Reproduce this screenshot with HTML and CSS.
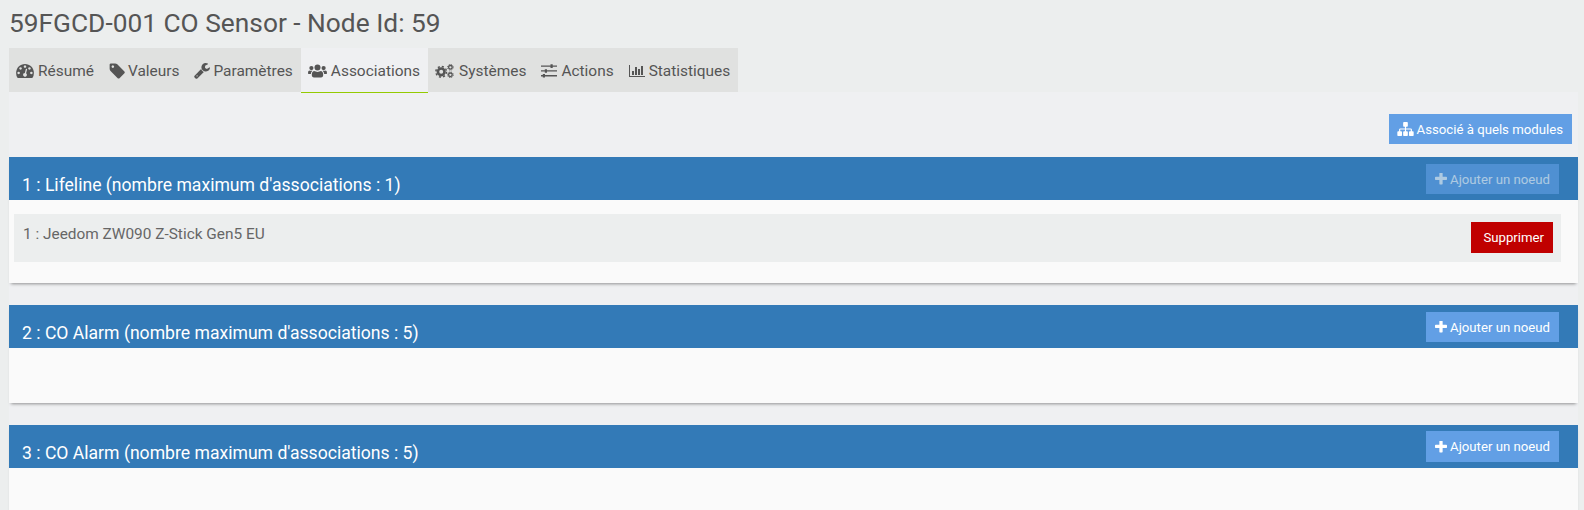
FILE: index.html
```html
<!DOCTYPE HTML>
<html lang="fr">
<head>
    <meta charset="UTF-8">
    <title>59FGCD-001 CO Sensor - Node Id: 59</title>
    <link rel="stylesheet" href="styles.css">
</head>
<body>
    <svg class="defs" width="0" height="0">
        <symbol id="icon-plus" viewBox="192 192 1408 1408"><path d="M1600 736v192q0 40-28 68t-68 28h-416v416q0 40-28 68t-68 28h-192q-40 0-68-28t-28-68v-416h-416q-40 0-68-28t-28-68v-192q0-40 28-68t68-28h416v-416q0-40 28-68t68-28h192q40 0 68 28t28 68v416h416q40 0 68 28t28 68z"/></symbol>
    </svg>

    <h1>59FGCD-001 CO Sensor - Node Id: 59</h1>

    <!-- onglets -->
    <ul class="tabs">
        <li class="tab">
            <svg class="icon icon-gauge" viewBox="0 256 1792 1408"><path d="M384 1152q0-53-37.5-90.5t-90.5-37.5-90.5 37.5-37.5 90.5 37.5 90.5 90.5 37.5 90.5-37.5 37.5-90.5zm192-448q0-53-37.5-90.5t-90.5-37.5-90.5 37.5-37.5 90.5 37.5 90.5 90.5 37.5 90.5-37.5 37.5-90.5zm428 481l101-382q6-26-7.5-48.5t-38.5-29.5-48 6.5-30 39.5l-101 382q-60 5-107 43.5t-63 98.5q-20 77 20 146t117 89 146-20 89-117q16-60-6-117t-72-91zm660-33q0-53-37.5-90.5t-90.5-37.5-90.5 37.5-37.5 90.5 37.5 90.5 90.5 37.5 90.5-37.5 37.5-90.5zm-640-640q0-53-37.5-90.5t-90.5-37.5-90.5 37.5-37.5 90.5 37.5 90.5 90.5 37.5 90.5-37.5 37.5-90.5zm448 192q0-53-37.5-90.5t-90.5-37.5-90.5 37.5-37.5 90.5 37.5 90.5 90.5 37.5 90.5-37.5 37.5-90.5zm320 448q0 261-141 483-19 29-54 29h-1402q-35 0-54-29-141-221-141-483 0-182 71-348t191-286 286-191 348-71 348 71 286 191 191 286 71 348z"/></svg>
            Résumé
        </li>
        <li class="tab">
            <svg class="icon icon-tag" viewBox="64 128 1600 1520"><path d="M576 448q0-53-37.5-90.5t-90.5-37.5-90.5 37.5-37.5 90.5 37.5 90.5 90.5 37.5 90.5-37.5 37.5-90.5zm1067 576q0 53-37 90l-491 492q-39 37-91 37-53 0-90-37l-715-716q-38-37-64.5-101t-26.5-117v-416q0-52 38-90t90-38h416q53 0 117 26.5t102 64.5l715 714q37 39 37 91z"/></svg>
            Valeurs
        </li>
        <li class="tab">
            <svg class="icon icon-tag" viewBox="64 128 1664 1664"><path d="M448 1472q0-26-19-45t-45-19-45 19-19 45 19 45 45 19 45-19 19-45zm644-420l-682 682q-37 37-90 37-52 0-91-37l-106-108q-38-36-38-90 0-53 38-91l681-681q39 98 114.5 173.5t173.5 114.5zm634-435q0 39-23 106-47 134-164.5 217.5t-258.5 83.5q-185 0-316.5-131.5t-131.5-316.5 131.5-316.5 316.5-131.5q58 0 121.5 16.5t107.5 46.5q16 11 16 28t-16 28l-293 169v224l193 107q5-3 79-48.5t135.5-81 70.5-35.5q15 0 23.5 10t8.5 25z"/></svg>
            Paramètres
        </li>
        <li class="tab active">
            <svg class="icon icon-users" viewBox="0 0 19 13">
                <circle cx="9.5" cy="3" r="3"/>
                <circle cx="3.4" cy="3.6" r="2.1"/>
                <circle cx="15.6" cy="3.6" r="2.1"/>
                <path d="M6 6.6q3.5 1.6 7 0 2.2.4 2.2 3.7 0 2.7-2.2 2.7H6q-2.2 0-2.2-2.7 0-3.3 2.2-3.7z"/>
                <path d="M3.2 6.2h1.2q-1.5 1.2-1.6 3.4H1.2Q0 9.600 0 8.400 0 6.200 1.200 6q1 .5 2 .2zM15.800 6.200h-1.200q1.500 1.200 1.600 3.400h1.600Q19 9.600 19 8.400 19 6.200 17.800 6q-1 .5-2 .2z"/>
            </svg>
            Associations
        </li>
        <li class="tab">
            <svg class="icon icon-cogs" viewBox="0 0 19 14">
                <circle class="gear-ring" cx="6.2" cy="7.8" r="3.3"/>
                <circle class="gear-teeth" cx="6.2" cy="7.8" r="5.3"/>
                <circle class="gear-ring-small" cx="15.4" cy="3.300" r="1.800"/>
                <circle class="gear-teeth-small" cx="15.4" cy="3.300" r="2.800"/>
                <circle class="gear-ring-small" cx="15.4" cy="10.800" r="1.800"/>
                <circle class="gear-teeth-small" cx="15.4" cy="10.800" r="2.800"/>
            </svg>
            Systèmes
        </li>
        <li class="tab">
            <svg class="icon icon-sliders" viewBox="0 0 16 14">
                <path d="M0 1.500h16v1.300H0zM0 6.300h16v1.300H0zM0 11.100h16v1.300H0z"/>
                <path d="M9.500.3h2.200v3.600H9.500zM3.800 5.200H6v3.600H3.800zM1.800 10h2.200v3.600H1.800z"/>
            </svg>
            Actions
        </li>
        <li class="tab">
            <svg class="icon icon-chart" viewBox="0 128 2048 1536"><path d="M640 896v512h-256v-512h256zm384-512v1024h-256v-1024h256zm1024 1152v128h-2048v-1536h128v1408h1920zm-640-896v768h-256v-768h256zm384-384v1152h-256v-1152h256z"/></svg>
            Statistiques
        </li>
    </ul>

    <div class="tab-content">
        <div class="toolbar">
            <a class="btn">
                <svg class="icon-map" viewBox="0 128 1792 1536"><path d="M1792 1248v320q0 40-28 68t-68 28h-320q-40 0-68-28t-28-68v-320q0-40 28-68t68-28h96v-192h-512v192h96q40 0 68 28t28 68v320q0 40-28 68t-68 28h-320q-40 0-68-28t-28-68v-320q0-40 28-68t68-28h96v-192h-512v192h96q40 0 68 28t28 68v320q0 40-28 68t-68 28h-320q-40 0-68-28t-28-68v-320q0-40 28-68t68-28h96v-192q0-52 38-90t90-38h512v-192h-96q-40 0-68-28t-28-68v-320q0-40 28-68t68-28h320q40 0 68 28t28 68v320q0 40-28 68t-68 28h-96v192h512q52 0 90 38t38 90v192h96q40 0 68 28t28 68z"/></svg>
                Associé à quels modules
            </a>
        </div>

        <!-- groupes d'associations -->
        <section class="panel">
            <div class="panel-heading">
                <h3>1 : Lifeline (nombre maximum d'associations : 1)</h3>
                <a class="btn btn-disabled"><svg class="icon-plus"><use href="#icon-plus"/></svg> Ajouter un noeud</a>
            </div>
            <div class="panel-body">
                <div class="assoc-row">
                    <span class="assoc-name">1 : Jeedom ZW090 Z-Stick Gen5 EU</span>
                    <a class="btn btn-danger">Supprimer</a>
                </div>
            </div>
        </section>

        <section class="panel">
            <div class="panel-heading">
                <h3>2 : CO Alarm (nombre maximum d'associations : 5)</h3>
                <a class="btn"><svg class="icon-plus"><use href="#icon-plus"/></svg> Ajouter un noeud</a>
            </div>
            <div class="panel-body"></div>
        </section>

        <section class="panel">
            <div class="panel-heading">
                <h3>3 : CO Alarm (nombre maximum d'associations : 5)</h3>
                <a class="btn btn-tall"><svg class="icon-plus"><use href="#icon-plus"/></svg> Ajouter un noeud</a>
            </div>
            <div class="panel-body"></div>
        </section>
    </div>
</body>
</html>
```

FILE: styles.css
```css
html, body {
    height: 100%;
    overflow: hidden;
}
body {
    margin: 0;
    padding: 0 6px 0 9px;
    background-color: #eceeee;
    font-family: Roboto, Arial, sans-serif;
    font-size: 14px;
    color: #555;
}
.defs {
    position: absolute;
}
h1 {
    margin: 0;
    padding-top: 6px;
    height: 48px;
    box-sizing: border-box;
    font-size: 26.3px;
    line-height: 34px;
    font-weight: 400;
    color: #555;
}
.tabs {
    display: flex;
    margin: 0;
    padding: 0;
    list-style: none;
    height: 44px;
    width: 729px;
    background: #e0e1e0;
}
.tab {
    display: flex;
    align-items: center;
    gap: 3px;
    padding: 2px 8px 0 7px;
    font-size: 15.45px;
    white-space: nowrap;
}
.tab.active {
    align-self: flex-start;
    height: 45px;
    box-sizing: border-box;
    background: #eff0f2;
    border-bottom: 1px solid #94ca02;
}
.icon {
    fill: #555;
}
.icon-gauge {
    width: 18px;
    height: 14px;
    margin-right: 1px;
}
.icon-tag {
    width: 16px;
    height: 16px;
}
.icon-users {
    width: 19px;
    height: 14px;
    margin-right: 1px;
}
.icon-cogs {
    width: 19px;
    height: 14px;
    margin-right: 2px;
}
.icon-sliders {
    width: 16px;
    height: 14px;
    margin-right: 1px;
}
.icon-chart {
    width: 16px;
    height: 12px;
    margin-right: 1px;
}
.gear-ring {
    fill: none;
    stroke: #555;
    stroke-width: 2.6;
}
.gear-teeth {
    fill: none;
    stroke: #555;
    stroke-width: 1.5;
    stroke-dasharray: 2.1 2.06;
}
.gear-ring-small {
    fill: none;
    stroke: #555;
    stroke-width: 1.3;
}
.gear-teeth-small {
    fill: none;
    stroke: #555;
    stroke-width: 1;
    stroke-dasharray: 1.2 1;
}
.tab-content {
    background: #eff0f2;
    height: calc(100vh - 92px);
}
.toolbar {
    display: flex;
    justify-content: flex-end;
    padding: 22px 6px 0 0;
    height: 65px;
    box-sizing: border-box;
}
.btn {
    display: inline-flex;
    align-items: center;
    gap: 3px;
    height: 30px;
    padding: 0 9px 0 8px;
    background: #629fe5;
    color: #fff;
    font-size: 13.2px;
    white-space: nowrap;
}
.btn-disabled {
    opacity: 0.6;
}
.btn-tall {
    height: 31px;
    margin-top: -1px;
}
.btn-danger {
    height: 31px;
    padding: 0 9px 0 12px;
    background: #c00000;
}
.icon-plus {
    width: 12px;
    height: 12px;
    margin-left: 1px;
    fill: #fff;
}
.icon-map {
    width: 17px;
    height: 14px;
    fill: #fff;
}
.panel {
    margin-bottom: 22px;
    background: #fafafa;
    box-shadow: 0 3px 3px -2px rgba(0, 0, 0, 0.4);
}
.panel-heading {
    display: flex;
    justify-content: space-between;
    height: 43px;
    padding: 7px 19px 0 13px;
    box-sizing: border-box;
    background: #337ab7;
    color: #fff;
}
.panel-heading h3 {
    margin: 0;
    padding-top: 9px;
    font-size: 17.6px;
    line-height: 24px;
    font-weight: 400;
}
.panel-body {
    height: 83px;
    box-sizing: border-box;
    padding: 14px 17px 0 5px;
}
.panel:nth-child(n+3) .panel-body {
    height: 55px;
}
.assoc-row {
    display: flex;
    justify-content: space-between;
    align-items: flex-start;
    height: 48px;
    padding: 8px 8px 0 9px;
    box-sizing: border-box;
    background: #eceeee;
    color: #666;
}
.assoc-name {
    padding-top: 3px;
    font-size: 15.4px;
}
```
